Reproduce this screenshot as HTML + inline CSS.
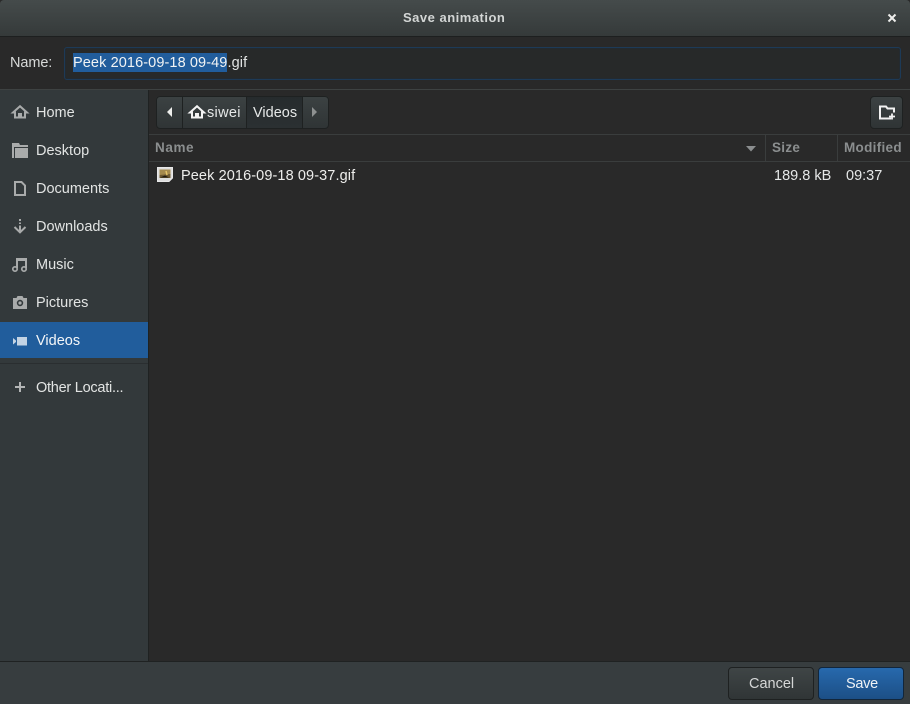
<!DOCTYPE html>
<html><head><meta charset="utf-8"><style>
html,body{margin:0;padding:0;width:910px;height:704px;overflow:hidden;background:#292929}
body{position:relative;font-family:"Liberation Sans","DejaVu Sans",sans-serif;font-size:14.5px;color:#eeeeec}
.a{position:absolute}
.t{position:absolute;white-space:nowrap;line-height:18px;height:18px}
svg{position:absolute;overflow:visible}
.s{color:#e2e4e3;left:36px}
.h{color:#8b8e8f;font-weight:bold;font-size:13.5px;letter-spacing:.3px}
</style></head><body>
<div class="a" style="left:0;top:0;width:910px;height:36px;background:linear-gradient(#454b4b,#353a3a);border-top-left-radius:4px;border-top-right-radius:4px"></div>
<div class="a" style="left:0;top:36px;width:910px;height:1px;background:#1d1f1f"></div>
<div class="t" style="left:403px;top:9px;font-weight:bold;font-size:13px;color:#d3d6d5;letter-spacing:.5px">Save animation</div>
<svg style="left:887px;top:13px" width="10" height="10"><path d="M1.5 1.5L8.5 8.5M8.5 1.5L1.5 8.5" stroke="#eeeeec" stroke-width="2"/></svg>

<div class="a" style="left:0;top:37px;width:910px;height:52px;background:#292929"></div>
<div class="a" style="left:0;top:89px;width:910px;height:1px;background:#3e4242"></div>
<div class="t" style="left:10px;top:54px;color:#d8dad9;letter-spacing:-.1px">Name:</div>
<div class="a" style="left:64px;top:47px;width:835px;height:31px;border:1px solid #1d3a57;border-radius:3px;background:#272929;box-shadow:inset 0 0 0 1px #232a30"></div>
<div class="a" style="left:73px;top:53px;width:154px;height:19px;background:#215d9c"></div>
<div class="t" style="left:73px;top:54px;color:#f2f4f4;letter-spacing:.1px">Peek 2016-09-18 09-49<span style="color:#e2e4e3">.gif</span></div>

<div class="a" style="left:0;top:90px;width:148px;height:571px;background:#33393b"></div>
<div class="a" style="left:148px;top:90px;width:1px;height:571px;background:#1f2222"></div>

<svg style="left:12px;top:105px" width="16" height="14"><path d="M8 1.200L1 7.500H3V12.500H7V9H9V12.500H13V7.500H15Z" fill="none" stroke="#a9abab" stroke-width="2"/></svg>
<div class="t s" style="top:104px">Home</div>
<svg style="left:12px;top:143px" width="16" height="15"><path d="M0 0H7L8 2H16V4H2V15H0Z" fill="#a9abab"/><path d="M3 5H16V15H3Z" fill="#a9abab"/></svg>
<div class="t s" style="top:142px">Desktop</div>
<svg style="left:14px;top:181px" width="12" height="15"><path d="M1 1H7.500L11 4.500V14H1Z" fill="none" stroke="#a9abab" stroke-width="2"/></svg>
<div class="t s" style="top:180px">Documents</div>
<svg style="left:13px;top:219px" width="14" height="15"><path d="M7 0V2M7 3.500V5M7 6.500V12.500M1.500 8L7 13.300L12.500 8" fill="none" stroke="#a9abab" stroke-width="2"/></svg>
<div class="t s" style="top:218px">Downloads</div>
<svg style="left:12px;top:258px" width="16" height="14"><path d="M5 10V1H14V10" fill="none" stroke="#a9abab" stroke-width="2"/><path d="M4 0H15V3H4Z" fill="#a9abab"/><circle cx="3" cy="11" r="2.200" fill="none" stroke="#a9abab" stroke-width="1.700"/><circle cx="12" cy="11" r="2.200" fill="none" stroke="#a9abab" stroke-width="1.700"/></svg>
<div class="t s" style="top:256px">Music</div>
<svg style="left:13px;top:296px" width="14" height="13"><path fill-rule="evenodd" d="M0 2H3.500L4.500 0H9.500L10.500 2H14V13H0ZM7 3.800A3.200 3.200 0 1 0 7 10.200A3.200 3.200 0 1 0 7 3.800Z" fill="#a9abab"/><circle cx="7" cy="7" r="1.600" fill="#a9abab"/></svg>
<div class="t s" style="top:294px">Pictures</div>
<div class="a" style="left:0;top:322px;width:148px;height:36px;background:#215d9c"></div>
<svg style="left:13px;top:336px" width="14" height="10"><path d="M4 1H14V9.500H4ZM0 2L3 4.500V6L0 8.500Z" fill="#c3d3e4"/></svg>
<div class="t s" style="top:332px;color:#f4f6f8">Videos</div>
<div class="a" style="left:0;top:363px;width:148px;height:1px;background:#2a2e30"></div>
<svg style="left:15px;top:382px" width="10" height="10"><path d="M5 0V10M0 5H10" stroke="#b3b5b5" stroke-width="2"/></svg>
<div class="t s" style="top:379px;letter-spacing:-.25px">Other Locati...</div>

<div class="a" style="left:156px;top:96px;width:173px;height:33px;border-radius:4px;background:linear-gradient(#3c4243,#2f3435);box-shadow:inset 0 0 0 1px #1e2121"></div>
<div class="a" style="left:246px;top:97px;width:56px;height:31px;background:linear-gradient(#262b2d,#2b3032)"></div>
<div class="a" style="left:182px;top:97px;width:1px;height:31px;background:#1e2121"></div>
<div class="a" style="left:246px;top:97px;width:1px;height:31px;background:#1e2121"></div>
<div class="a" style="left:302px;top:97px;width:1px;height:31px;background:#1e2121"></div>
<svg style="left:166px;top:107px" width="8" height="10"><path d="M6 0V10L1 5Z" fill="#eeeeec"/></svg>
<svg style="left:189px;top:105px" width="16" height="14"><path d="M8 1.200L1 7.500H3V12.500H7V9H9V12.500H13V7.500H15Z" fill="none" stroke="#f4f4f4" stroke-width="2"/></svg>
<div class="t" style="left:207px;top:104px;color:#e6e8e8;letter-spacing:.3px">siwei</div>
<div class="t" style="left:253px;top:104px;color:#e6e8e8">Videos</div>
<svg style="left:311px;top:107px" width="8" height="10"><path d="M1 0V10L6 5Z" fill="#8e9191"/></svg>

<div class="a" style="left:870px;top:96px;width:33px;height:33px;box-sizing:border-box;border:1px solid #1e2121;border-radius:4px;background:linear-gradient(#3c4243,#2f3435)"></div>
<svg style="left:879px;top:105px" width="17" height="15"><path d="M12 13.500H1V1.500H7L8.500 3.500H15V7.500" fill="none" stroke="#f2f2f2" stroke-width="2"/><path d="M10 11.500H16M13 8.500V14.500" stroke="#f2f2f2" stroke-width="1.800"/></svg>

<div class="a" style="left:149px;top:134px;width:761px;height:1px;background:#3a3d3d"></div>
<div class="a" style="left:149px;top:161px;width:761px;height:1px;background:#3a3d3d"></div>
<div class="a" style="left:765px;top:135px;width:1px;height:26px;background:#3a3d3d"></div>
<div class="a" style="left:837px;top:135px;width:1px;height:26px;background:#3a3d3d"></div>
<div class="t h" style="left:155px;top:139px;letter-spacing:.6px">Name</div>
<svg style="left:746px;top:146px" width="11" height="6"><path d="M0 0H10L5 5.500Z" fill="#8b8e8f"/></svg>
<div class="t h" style="left:772px;top:139px">Size</div>
<div class="t h" style="left:844px;top:139px">Modified</div>

<svg style="left:157px;top:167px" width="16" height="15"><path d="M.500 .500H15.500V11L12 14.500H.500Z" fill="#ddd" stroke="#e8e8e8"/><rect x="2.500" y="2.500" width="11" height="8.500" fill="#6f5a32"/><path d="M2.500 2.500H13.500V7L2.500 8Z" fill="#a58a4e"/><path d="M3 10.500L8 8.500L12 10.500Z" fill="#1f1a10"/><path d="M9 4L10 8" stroke="#e6c46a" stroke-width="1.500"/></svg>
<div class="t" style="left:181px;top:167px;color:#eeeeec;letter-spacing:.1px">Peek 2016-09-18 09-37.gif</div>
<div class="t" style="left:774px;top:167px;color:#e6e8e8">189.8 kB</div>
<div class="t" style="left:846px;top:167px;color:#e6e8e8">09:37</div>

<div class="a" style="left:0;top:661px;width:910px;height:43px;background:#373d3f;border-top:1px solid #1f2222;box-sizing:border-box"></div>
<div class="a" style="left:728px;top:667px;width:86px;height:33px;box-sizing:border-box;border:1px solid #1e2121;border-radius:4px;background:linear-gradient(#3f4546,#303536)"></div>
<div class="a" style="left:818px;top:667px;width:86px;height:33px;box-sizing:border-box;border:1px solid #12263b;border-radius:4px;background:linear-gradient(#2769ad,#1c4f86)"></div>
<div class="t" style="left:749px;top:675px;color:#d5d7d7">Cancel</div>
<div class="t" style="left:846px;top:675px;color:#eef2f6;letter-spacing:-.3px">Save</div>
</body></html>
